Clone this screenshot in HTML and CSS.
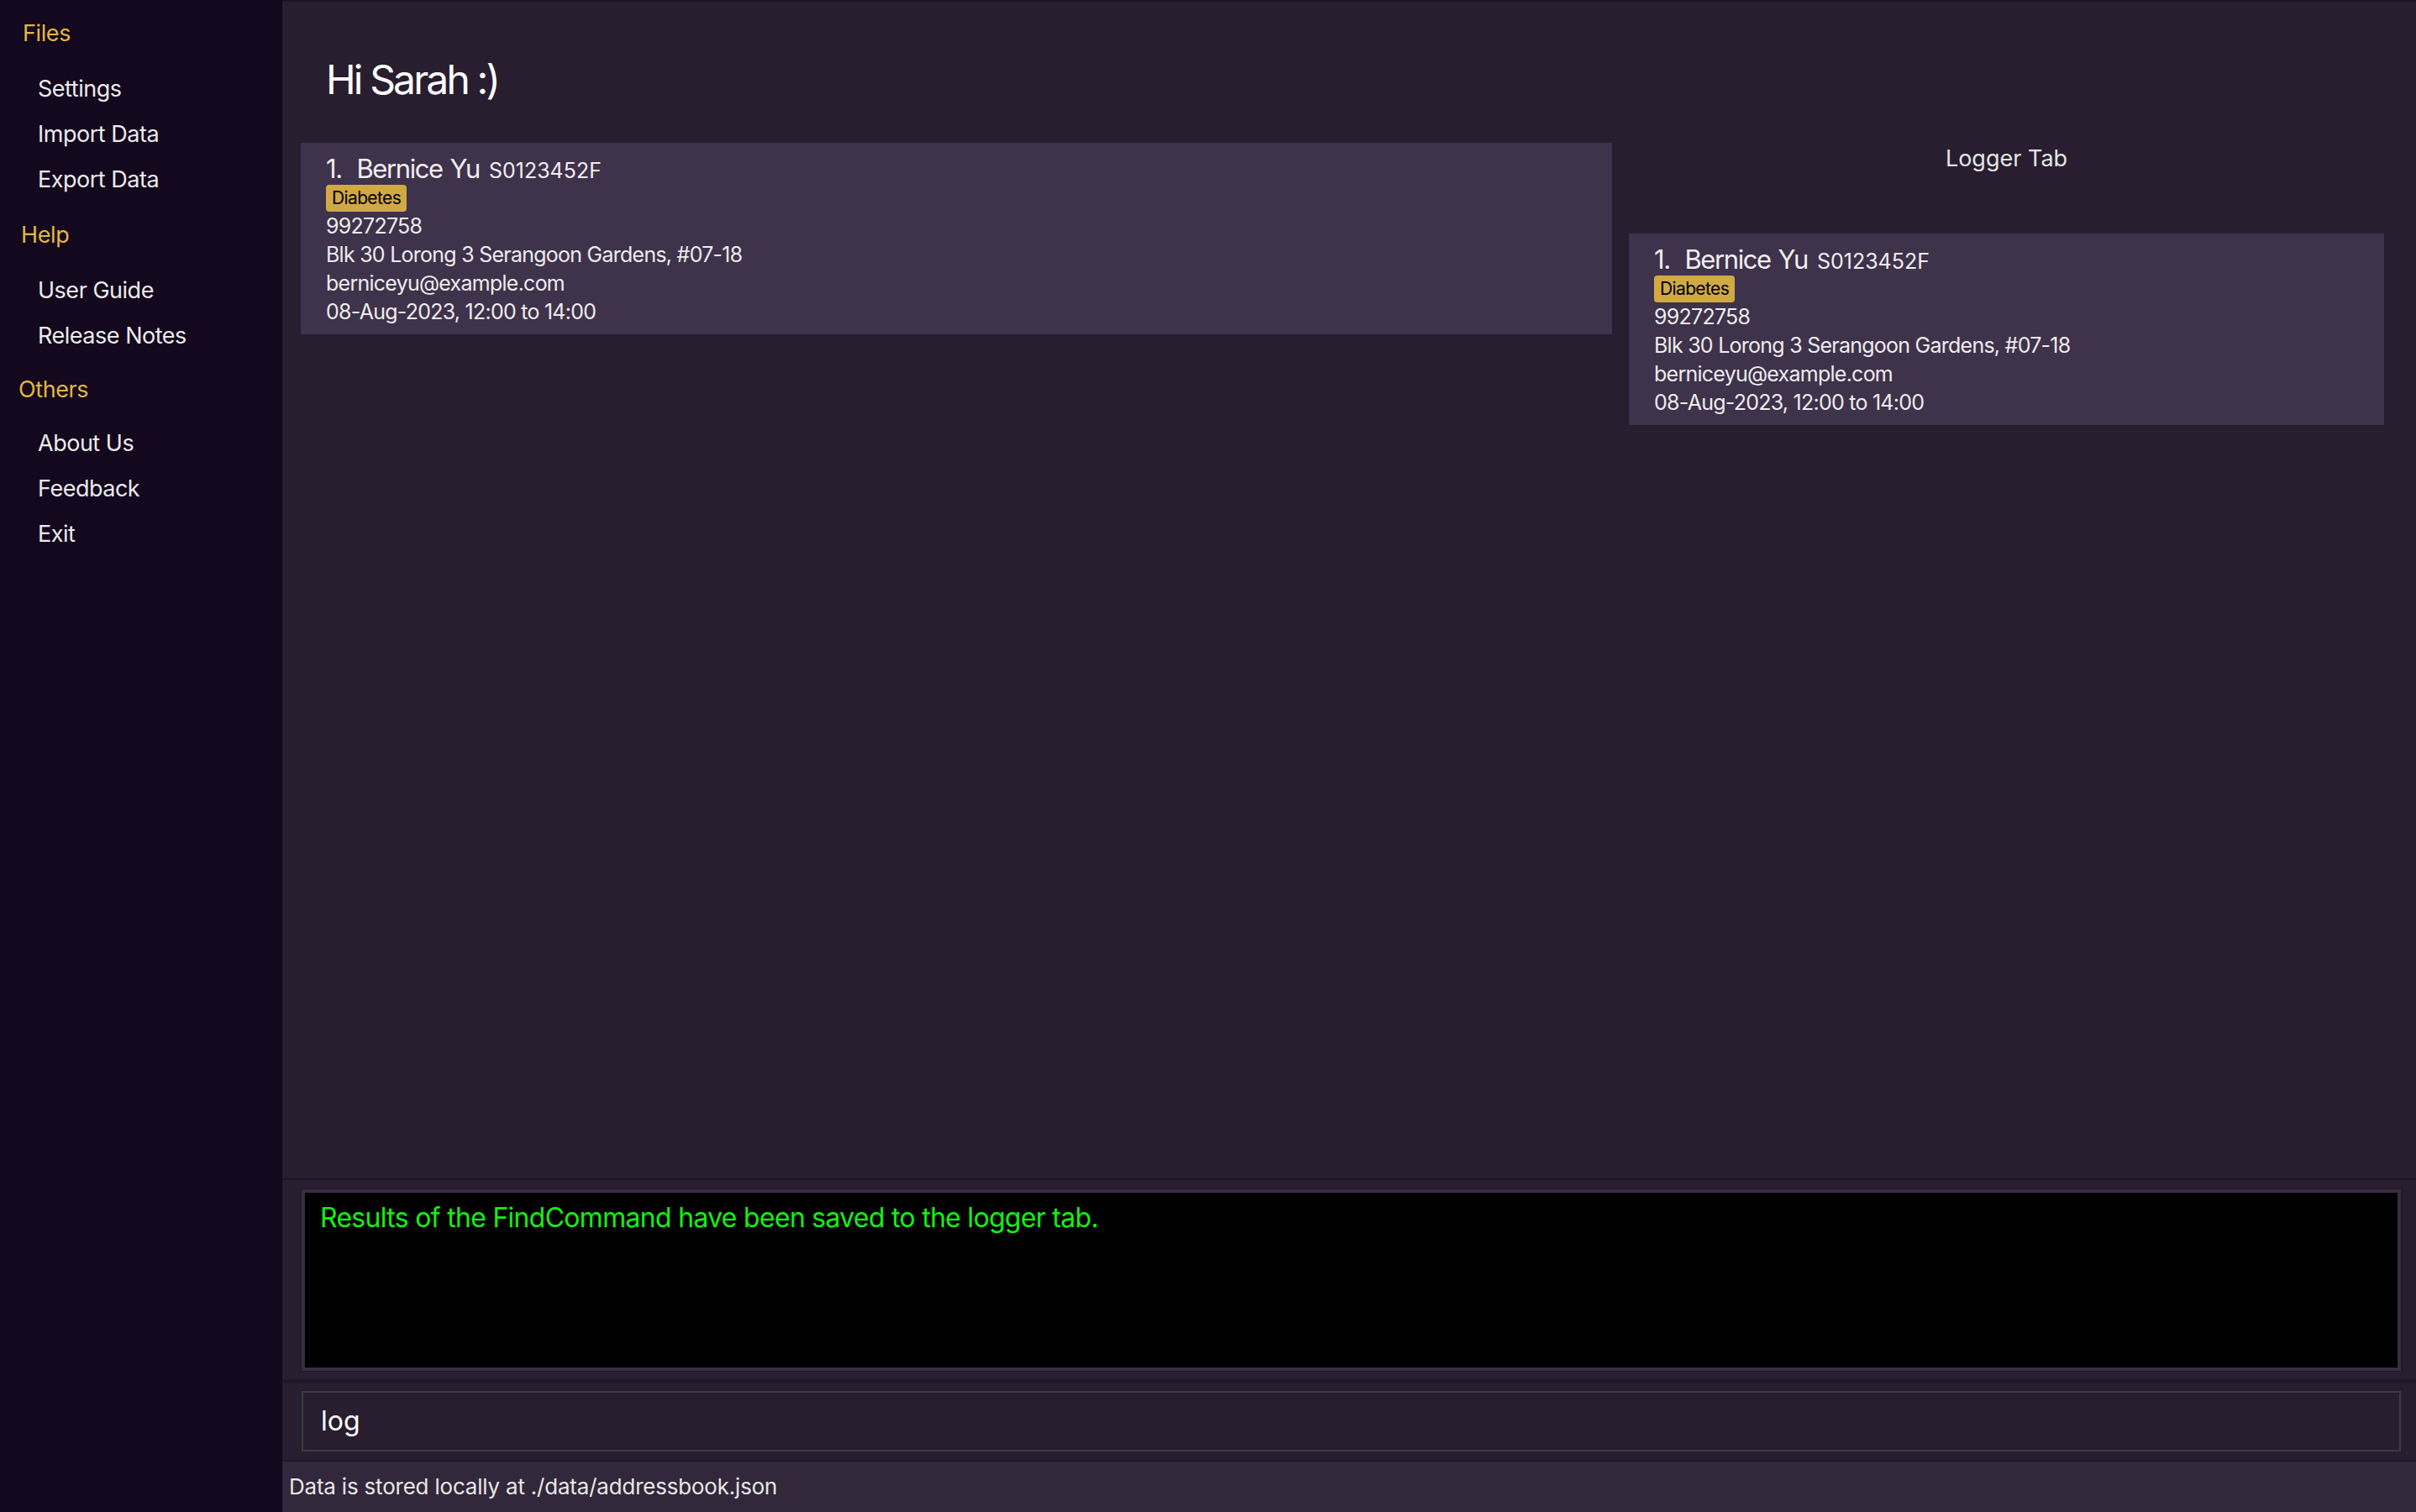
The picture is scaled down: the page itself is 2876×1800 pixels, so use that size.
FILE: index.html
```html
<!DOCTYPE html>
<html lang="en">
<head>
<meta charset="utf-8">
<title>Clinic Assistant</title>
<link rel="stylesheet" href="styles.css">
</head>
<body>
<div class="app">
  <nav class="sidebar">
    <div class="menu-header">Files</div>
    <div class="menu-item">Settings</div>
    <div class="menu-item">Import Data</div>
    <div class="menu-item">Export Data</div>
    <div class="menu-header help">Help</div>
    <div class="menu-item">User Guide</div>
    <div class="menu-item">Release Notes</div>
    <div class="menu-header others">Others</div>
    <div class="menu-item">About Us</div>
    <div class="menu-item">Feedback</div>
    <div class="menu-item">Exit</div>
  </nav>
  <main class="main">
    <section class="top">
      <h1 class="greeting">Hi Sarah :)</h1>
      <div class="columns">
        <div class="list-col">
          <div class="card">
            <div class="name-row"><span class="name">1.&nbsp; Bernice Yu</span><span class="nric">S0123452F</span></div>
            <div class="tags"><span class="tag">Diabetes</span></div>
            <div class="line">99272758</div>
            <div class="line">Blk 30 Lorong 3 Serangoon Gardens, #07-18</div>
            <div class="line">berniceyu@example.com</div>
            <div class="line">08-Aug-2023, 12:00 to 14:00</div>
          </div>
        </div>
        <div class="logger-col">
          <div class="logger-title">Logger Tab</div>
          <div class="card logger-card">
            <div class="name-row"><span class="name">1.&nbsp; Bernice Yu</span><span class="nric">S0123452F</span></div>
            <div class="tags"><span class="tag">Diabetes</span></div>
            <div class="line">99272758</div>
            <div class="line">Blk 30 Lorong 3 Serangoon Gardens, #07-18</div>
            <div class="line">berniceyu@example.com</div>
            <div class="line">08-Aug-2023, 12:00 to 14:00</div>
          </div>
        </div>
      </div>
    </section>
    <section class="result-area">
      <div class="result-box">Results of the FindCommand have been saved to the logger tab.</div>
    </section>
    <section class="command-area">
      <div class="command-box">log</div>
    </section>
    <footer class="status">Data is stored locally at ./data/addressbook.json</footer>
  </main>
</div>
</body>
</html>
```

FILE: styles.css
```css
html, body {
  margin: 0;
  padding: 0;
}

body {
  width: 2876px;
  height: 1800px;
  overflow: hidden;
  font-family: Inter, "Noto Sans", "Liberation Sans", sans-serif;
  color: #ececec;
  background: #281e2f;
}

.app {
  display: flex;
  width: 100%;
  height: 100%;
}

/* Sidebar */
.sidebar {
  flex: 0 0 336px;
  background: #13081e;
  padding-top: 13px;
  box-sizing: border-box;
}

.menu-header {
  font-size: 27px;
  line-height: 54px;
  letter-spacing: -0.015em;
  color: #e2b740;
  padding-left: 27px;
  margin-bottom: 12px;
}

.menu-header.help {
  padding-left: 25px;
  margin-top: 12px;
}

.menu-header.others {
  padding-left: 22px;
  margin-top: 10px;
  margin-bottom: 10px;
}

.menu-item {
  font-size: 27px;
  line-height: 54px;
  letter-spacing: -0.018em;
  padding-left: 45px;
  color: #ebebeb;
}

/* Main */
.main {
  flex: 1;
  display: flex;
  flex-direction: column;
  min-width: 0;
}

.top {
  flex: 1;
  border-top: 2px solid #1c1523;
  padding-left: 22px;
  border-bottom: 3px solid #1e1725;
}

.greeting {
  margin: 64px 0 0 30px;
  font-size: 48px;
  line-height: 58px;
  font-weight: 400;
  letter-spacing: -0.06em;
  color: #ffffff;
}

.columns {
  display: flex;
  margin-top: 46px;
}

.list-col {
  flex: 0 0 1561px;
}

.logger-col {
  flex: 1;
  padding-right: 18px;
}

.card {
  background: #3f324b;
  padding: 12px 30px 10px 30px;
}

.name-row {
  display: flex;
  align-items: baseline;
  height: 38px;
}

.name {
  font-size: 31px;
  line-height: 38px;
  letter-spacing: -0.045em;
  word-spacing: 1.5px;
  color: #efefef;
}

.nric {
  font-size: 25px;
  margin-left: 11px;
  letter-spacing: 0;
  color: #efefef;
}

.tags {
  display: flex;
  height: 32px;
}

.tag {
  background: #d0a944;
  color: #000;
  font-size: 21px;
  line-height: 32px;
  letter-spacing: -0.03em;
  padding: 0 7px;
  border-radius: 4px;
}

.line {
  font-size: 25px;
  line-height: 34px;
  letter-spacing: -0.03em;
  color: #ededed;
}

.logger-title {
  margin-top: 2px;
  font-size: 27px;
  line-height: 33px;
  text-align: center;
  color: #e6e6e6;
}

.logger-card {
  margin: 73px 20px 0 20px;
}

/* Result */
.result-area {
  padding: 11px 18px 10px 23px;
  border-bottom: 4px solid #1e1725;
}

.result-box {
  height: 216px;
  box-sizing: border-box;
  background: #000;
  border: 4px solid #392c43;
  outline: 1px solid #1f1727;
  padding: 10px 18px;
  font-size: 32px;
  line-height: 40px;
  letter-spacing: -0.022em;
  color: #14f014;
}

/* Command */
.command-area {
  padding: 10px 18px 10px 23px;
  border-bottom: 2px solid #1e1725;
}

.command-box {
  height: 72px;
  box-sizing: border-box;
  border: 2px solid #3d3b3d;
  padding-left: 21px;
  font-size: 32px;
  line-height: 68px;
  color: #ffffff;
}

/* Status */
.status {
  height: 60px;
  background: #33273b;
  padding-left: 8px;
  font-size: 26px;
  line-height: 60px;
  letter-spacing: -0.008em;
  color: #e8e8e8;
}
```
